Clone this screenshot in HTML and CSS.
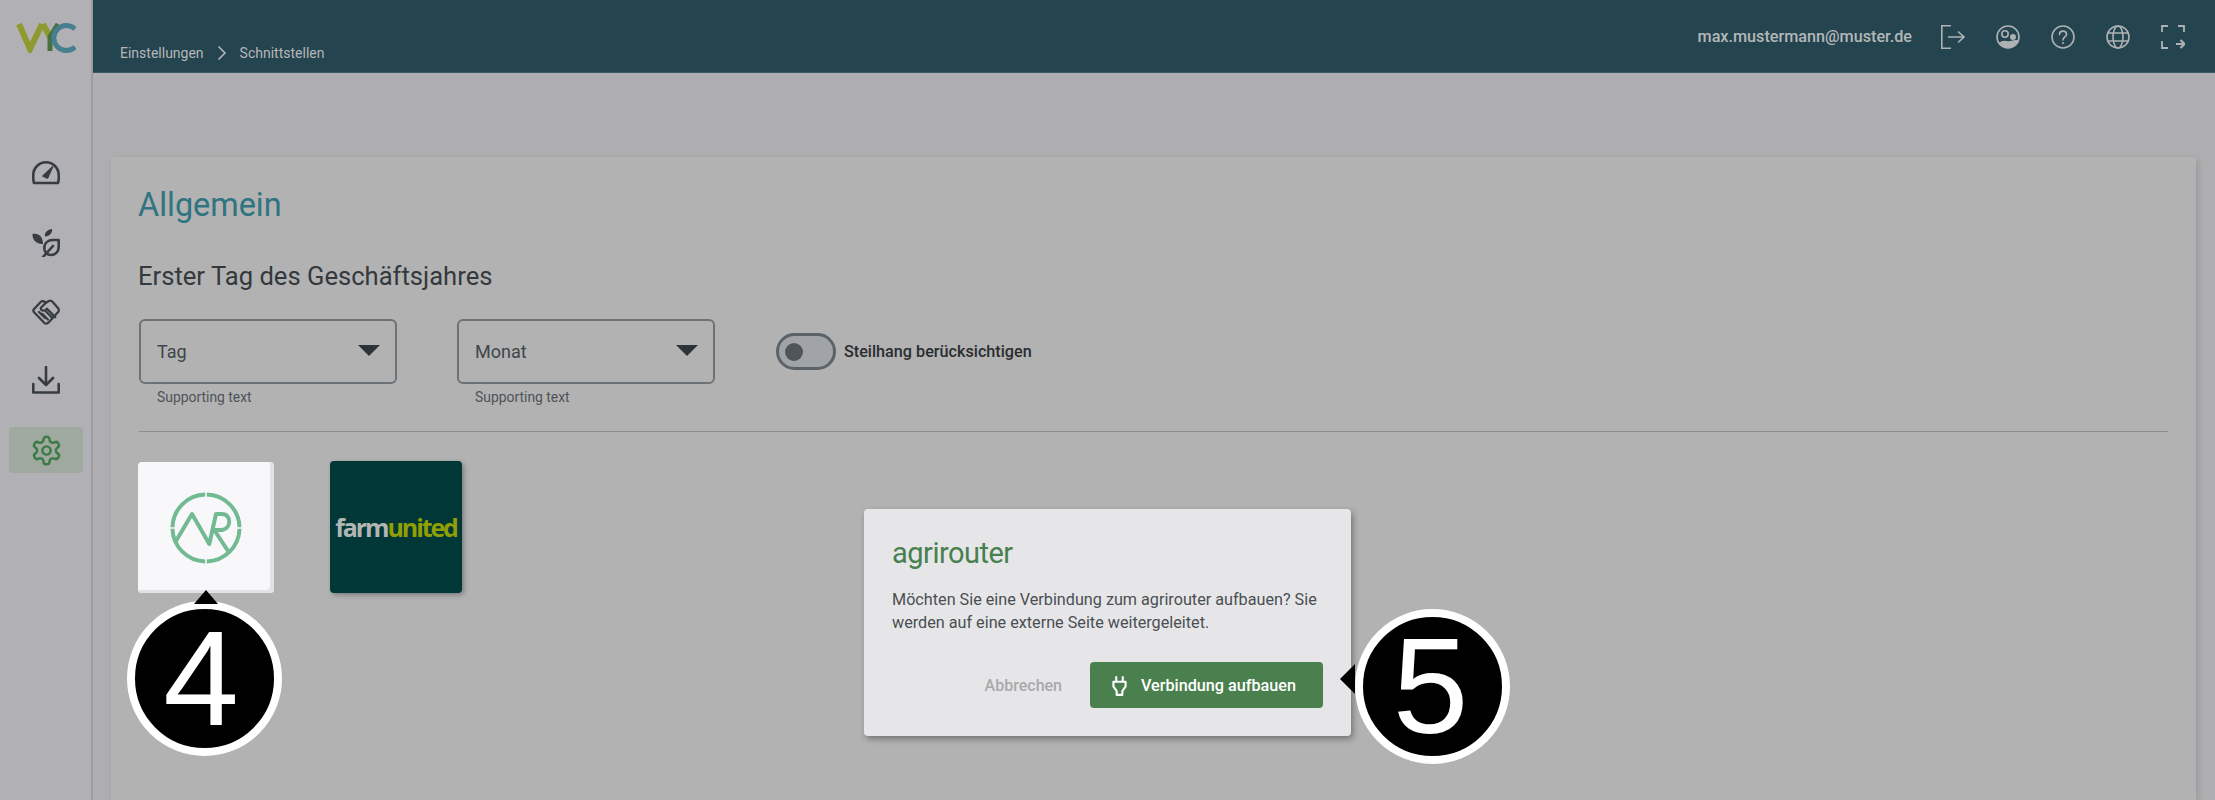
FILE: index.html
```html
<!DOCTYPE html>
<html lang="de">
<head>
    <meta charset="UTF-8">
    <meta name="viewport" content="width=device-width, initial-scale=1.0">
    <title>Schnittstellen</title>
    <link rel="stylesheet" href="styles.css">
</head>
<body>

    <aside class="sidebar">
        <svg class="logo" viewBox="0 0 60 30" fill="none" stroke-width="6">
            <path d="M3 1 L14 26 L26 1" stroke="#8d9a2e"/>
            <path d="M27 1 L34 14" stroke="#8d9a2e"/>
            <path d="M42 1 L34 14 V28" stroke="#47703f" stroke-width="5"/>
            <path d="M59 6 A12.5 12.5 0 1 0 59 24" stroke="#467f8f" stroke-width="5"/>
        </svg>

        <nav class="nav">
            <a class="nav-item">
                <svg class="icon-gauge" viewBox="0 0 28 28" fill="none" stroke="#373c41" stroke-width="2.6" stroke-linecap="round">
                    <path d="M2 25 Q1 22 1.3 17 A12.7 12.7 0 1 1 26.7 17 Q27 22 26 25 Z" stroke-linejoin="round"/>
                    <path d="M11 18 L20.5 9 L15.5 20 Z" fill="#373c41" stroke-width="1.6" stroke-linejoin="round"/>
                </svg>
            </a>
            <a class="nav-item">
                <svg viewBox="0 0 28 28" fill="none" stroke="#373c41" stroke-width="2.6" stroke-linejoin="round">
                    <path d="M0.5 5 C6 3.5 11 7 11 15 C5 15.5 0 11 0.5 5 Z" fill="#373c41" stroke="none"/>
                    <path d="M20 0 C20.5 4 18 7 13 7.5 C12 4 15 0.5 20 0 Z" fill="#373c41" stroke="none"/>
                    <path d="M26.7 11 V18 C26.7 23 23 26 19 26 C15 26 12.3 23 12.3 19 C12.3 14 16 11 21 11 Z"/>
                    <path d="M11 28 L21 17" stroke-linecap="round"/>
                </svg>
            </a>
            <a class="nav-item">
                <svg viewBox="0 0 30 28" fill="none" stroke="#373c41" stroke-width="2.4" stroke-linejoin="round" stroke-linecap="round">
                    <path d="M2 11 L9 3.5 Q11 1.5 13.5 3 L15 4 L18 2.2 Q20 1 22 3 L28 10 Q29.5 12 28 14 L17.5 25.5 Q15 27.5 13 25.5 L3 15 Q0.5 13 2 11 Z"/>
                    <path d="M15 4 L9.5 9.5 Q9 12 11.5 12.5 Q14 13 16 10.5 L25 19.5"/>
                    <path d="M7.5 14 L14 20.5 M11 16 L17 22 M15 13.5 L21 19.5"/>
                </svg>
            </a>
            <a class="nav-item">
                <svg class="icon-download" viewBox="0 0 28 28" fill="none" stroke="#373c41" stroke-width="2.6" stroke-linecap="round" stroke-linejoin="round">
                    <path d="M14 1 V19 M7 12 L14 19 L21 12"/>
                    <path d="M1.3 18 V26.5 H26.7 V18"/>
                </svg>
            </a>
            <a class="nav-item active">
                <svg class="gear" viewBox="0 0 24 24" fill="none" stroke="#3c7b45" stroke-width="1.8" stroke-linejoin="round">
                    <path d="M12.22 2h-.44a2 2 0 0 0-2 2v.18a2 2 0 0 1-1 1.73l-.43.25a2 2 0 0 1-2 0l-.15-.08a2 2 0 0 0-2.73.73l-.22.38a2 2 0 0 0 .73 2.73l.15.1a2 2 0 0 1 1 1.72v.51a2 2 0 0 1-1 1.74l-.15.09a2 2 0 0 0-.73 2.73l.22.38a2 2 0 0 0 2.73.73l.15-.08a2 2 0 0 1 2 0l.43.25a2 2 0 0 1 1 1.73V20a2 2 0 0 0 2 2h.44a2 2 0 0 0 2-2v-.18a2 2 0 0 1 1-1.73l.43-.25a2 2 0 0 1 2 0l.15.08a2 2 0 0 0 2.73-.73l.22-.39a2 2 0 0 0-.73-2.73l-.15-.08a2 2 0 0 1-1-1.74v-.5a2 2 0 0 1 1-1.74l.15-.09a2 2 0 0 0 .73-2.73l-.22-.38a2 2 0 0 0-2.73-.73l-.15.08a2 2 0 0 1-2 0l-.43-.25a2 2 0 0 1-1-1.73V4a2 2 0 0 0-2-2z"/>
                    <circle cx="12" cy="12" r="3"/>
                </svg>
            </a>
        </nav>
    </aside>

    <div class="main">
        <header class="topbar">
            <div class="breadcrumb">
                <span>Einstellungen</span>
                <svg viewBox="0 0 10 16" fill="none" stroke="#b4b7b8" stroke-width="1.6"><path d="M1.5 1.5 L8 8 L1.5 14.5"/></svg>
                <span>Schnittstellen</span>
            </div>
            <div class="topbar-right">
                <span class="user">max.mustermann@muster.de</span>
                <div class="top-icons">
                    <svg viewBox="0 0 24 24" fill="none" stroke="#aeb2b4" stroke-width="1.6">
                        <path d="M10 0.8 H0.8 V23.2 H10"/>
                        <path d="M7 12 H23 M17 6.5 L23 12 L17 17.5"/>
                    </svg>
                    <svg viewBox="0 0 24 24" fill="none" stroke="#aeb2b4" stroke-width="1.6">
                        <circle cx="12" cy="12" r="11"/>
                        <circle cx="9" cy="9" r="3.2"/>
                        <circle cx="17" cy="12" r="2.2" fill="#aeb2b4"/>
                        <path d="M4 18 C8 15 10 17 12 17 C15 17 18 15 22 16 C19 22 8 24 4 18 Z" fill="#aeb2b4"/>
                    </svg>
                    <svg viewBox="0 0 24 24" fill="none" stroke="#aeb2b4" stroke-width="1.6">
                        <circle cx="12" cy="12" r="11"/>
                        <path d="M8.5 9.5 C8.5 5 15.5 5 15.5 9.5 C15.5 12 12 12 12 15" stroke-linecap="round"/>
                        <circle cx="12" cy="18" r="1" fill="#aeb2b4" stroke="none"/>
                    </svg>
                    <svg viewBox="0 0 24 24" fill="none" stroke="#aeb2b4" stroke-width="1.6">
                        <circle cx="12" cy="12" r="11"/>
                        <ellipse cx="12" cy="12" rx="5" ry="11"/>
                        <path d="M1.8 8 H22.2 M1.8 16 H22.2"/>
                    </svg>
                    <svg viewBox="0 0 24 24" fill="none" stroke="#aeb2b4" stroke-width="1.8">
                        <path d="M1 7 V1 H7 M17 1 H23 V7 M1 16 V23 H7"/>
                        <path d="M15 19 H23 M19.5 15 L23.5 19 L19.5 23" stroke-width="2.2"/>
                    </svg>
                </div>
            </div>
        </header>

        <main class="content">
            <section class="card">
                <h1>Allgemein</h1>
                <h2>Erster Tag des Geschäftsjahres</h2>

                <div class="form-row">
                    <div class="field">
                        <div class="select"><span>Tag</span><i class="caret"></i></div>
                        <div class="hint">Supporting text</div>
                    </div>
                    <div class="field">
                        <div class="select"><span>Monat</span><i class="caret"></i></div>
                        <div class="hint">Supporting text</div>
                    </div>
                    <label class="switch">
                        <span class="track"><span class="knob"></span></span>
                        Steilhang berücksichtigen
                    </label>
                </div>

                <hr class="divider">

                <div class="tiles">
                    <div class="tile tile-ar">
                        <svg viewBox="0 0 72 72" fill="none" stroke="#72ba92" stroke-width="4">
                            <path d="M36.8 2.5 A33.5 33.5 0 0 1 69.5 35.2"/>
                            <path d="M69.5 36.8 A33.5 33.5 0 0 1 36.8 69.5"/>
                            <path d="M35.2 69.5 A33.5 33.5 0 0 1 2.5 36.8"/>
                            <path d="M2.5 35.2 A33.5 33.5 0 0 1 35.2 2.5"/>
                            <path d="M6 49 L22 22 L39.3 52 L46 22 H52 C62 22 62 38 50 38 H44.3 L59.3 61" stroke-linejoin="round"/>
                        </svg>
                    </div>
                    <div class="tile tile-farm"><span class="farm">farm</span><span class="united">united</span></div>
                </div>
            </section>
        </main>
    </div>

    <div class="dialog">
        <h3>agrirouter</h3>
        <p>Möchten Sie eine Verbindung zum agrirouter aufbauen? Sie werden auf eine externe Seite weitergeleitet.</p>
        <div class="dialog-actions">
            <button class="btn-text">Abbrechen</button>
            <button class="btn-primary">
                <svg viewBox="0 0 16 22" fill="none" stroke="#fff" stroke-width="2.2" stroke-linejoin="round">
                    <path d="M4.5 1 V7 M11.5 1 V7"/>
                    <path d="M1.5 7 H14.5 V12 L11 17 V21 H5 V17 L1.5 12 Z"/>
                </svg>
                Verbindung aufbauen
            </button>
        </div>
    </div>

    <div class="callout callout-4">4</div>
    <div class="callout callout-5">5</div>

</body>
</html>
```

FILE: styles.css
```css
* {
    box-sizing: border-box;
}

body {
    font-family: Roboto, Arial, sans-serif;
    margin: 0;
    padding: 0;
    height: 100vh;
    overflow: hidden;
    display: flex;
    background-color: #aeaeb0;
    color: #33393d;
}

.sidebar {
    width: 93px;
    flex-shrink: 0;
    background-color: #b1b1b5;
    border-right: 2px solid #9d9da0;
    padding-top: 23px;
}

.logo {
    display: block;
    width: 60px;
    height: 30px;
    margin-left: 16px;
}

.nav {
    margin-top: 98px;
    margin-left: 9px;
    width: 74px;
    display: flex;
    flex-direction: column;
    gap: 23px;
}

.nav-item {
    height: 46px;
    display: flex;
    align-items: center;
    justify-content: center;
    border-radius: 4px;
}

.nav-item svg {
    width: 28px;
    height: 28px;
}

.nav-item svg.icon-gauge {
    margin-top: -4px;
}

.nav-item svg.icon-download {
    margin-top: -2px;
}

.nav-item svg.gear {
    width: 33px;
    height: 33px;
}

.nav-item.active {
    background-color: #a0a9a0;
}

.main {
    flex: 1;
    display: flex;
    flex-direction: column;
    min-width: 0;
}

.topbar {
    height: 73px;
    flex-shrink: 0;
    background-color: #24444f;
    border-bottom: 1px solid #3a5964;
    display: flex;
    justify-content: space-between;
    padding: 0 30px 0 27px;
    color: #b4b7b8;
}

.breadcrumb {
    display: flex;
    align-items: center;
    gap: 13px;
    font-size: 14px;
    align-self: flex-end;
    height: 36px;
    padding-bottom: 3px;
}

.breadcrumb svg {
    width: 10px;
    height: 16px;
}

.topbar-right {
    display: flex;
    align-items: center;
    gap: 29px;
    height: 73px;
}

.user {
    font-size: 16.2px;
    font-weight: 500;
}

.top-icons {
    display: flex;
    gap: 31px;
}

.top-icons svg {
    width: 24px;
    height: 24px;
}

.content {
    flex: 1;
    padding: 84px 19px 0 18px;
    min-height: 0;
}

.card {
    height: 100%;
    background-color: #b2b2b2;
    box-shadow: 2px 2px 6px rgba(0, 0, 0, 0.12);
    border-radius: 2px 2px 0 0;
    padding: 28px 28px 0 28px;
}

h1 {
    margin: 0 0 0 -1px;
    font-size: 32.4px;
    font-weight: 400;
    line-height: 40px;
    color: #2f7480;
}

h2 {
    margin: 35px 0 0 -1px;
    font-size: 25.6px;
    font-weight: 400;
    line-height: 32px;
    color: #33393d;
}

.form-row {
    display: flex;
    margin-top: 27px;
    align-items: flex-start;
}

.field {
    width: 258px;
    margin-right: 60px;
}

.select {
    height: 65px;
    border: 2px solid #6c7276;
    border-radius: 6px;
    display: flex;
    align-items: center;
    justify-content: space-between;
    padding: 0 15px 0 16px;
    font-size: 18px;
    color: #3f4549;
}

.caret {
    width: 0;
    height: 0;
    border-left: 11px solid transparent;
    border-right: 11px solid transparent;
    border-top: 11px solid #2d3337;
    margin-top: -2px;
}

.hint {
    margin-top: 5px;
    padding-left: 18px;
    font-size: 13.9px;
    line-height: 16px;
    color: #4d5358;
}

.switch {
    display: flex;
    align-items: center;
    gap: 8px;
    margin-left: 1px;
    margin-top: 14px;
    font-size: 16.2px;
    font-weight: 500;
    color: #2a2d2f;
}

.track {
    width: 60px;
    height: 37px;
    border: 3px solid #5c6368;
    border-radius: 19px;
    background-color: #a0a3a7;
    display: flex;
    align-items: center;
    padding-left: 6px;
}

.knob {
    width: 18px;
    height: 18px;
    border-radius: 50%;
    background-color: #4f5559;
}

.divider {
    border: none;
    border-top: 1px solid #8e8e8e;
    margin: 26px 0 0;
}

.tiles {
    display: flex;
    align-items: center;
    gap: 56px;
    margin-top: 28px;
}

.tile {
    display: flex;
    align-items: center;
    justify-content: center;
    border-radius: 4px;
}

.tile-ar {
    width: 136px;
    height: 131px;
    background-color: #f8f8fb;
    box-shadow: inset -4px -3px 0 #e3e3e5;
    margin-left: -1px;
    margin-top: 2px;
}

.tile-ar svg {
    width: 72px;
    height: 72px;
}

.tile-farm {
    width: 132px;
    height: 132px;
    background-color: #013736;
    box-shadow: 2px 2px 5px rgba(0, 0, 0, 0.3);
    font-family: "Open Sans", Arial, sans-serif;
    font-size: 25px;
    font-weight: 700;
    letter-spacing: -2.1px;
}

.farm {
    color: #b1b5b3;
}

.united {
    color: #8f9f05;
}

.dialog {
    position: absolute;
    left: 864px;
    top: 509px;
    width: 487px;
    height: 227px;
    background-color: #e6e6e8;
    border-radius: 4px;
    box-shadow: 2px 3px 6px rgba(0, 0, 0, 0.35);
    padding: 26px 28px 0;
}

h3 {
    margin: 0;
    font-size: 29px;
    font-weight: 400;
    letter-spacing: -0.5px;
    line-height: 36px;
    color: #47804f;
}

.dialog p {
    margin: 17px 0 0;
    font-size: 16.2px;
    line-height: 23px;
    color: #4a4f53;
}

.dialog-actions {
    display: flex;
    justify-content: flex-end;
    align-items: center;
    margin-top: 28px;
    gap: 28px;
}

.btn-text {
    border: none;
    background: none;
    padding: 0;
    font-family: inherit;
    font-size: 16px;
    font-weight: 500;
    color: #a9a9ab;
}

.btn-primary {
    width: 233px;
    height: 46px;
    border: none;
    border-radius: 4px;
    background-color: #4a804e;
    color: #fff;
    font-family: inherit;
    font-size: 16.2px;
    font-weight: 500;
    display: flex;
    align-items: center;
    gap: 14px;
    padding-left: 22px;
}

.btn-primary svg {
    width: 15px;
    height: 21px;
}

.callout {
    position: absolute;
    width: 155px;
    height: 155px;
    border-radius: 50%;
    border: 8px solid #fff;
    background-color: #000;
    color: #fff;
    font-family: "Liberation Sans", Arial, sans-serif;
    font-size: 136px;
    line-height: 139px;
    text-align: center;
}

.callout::before {
    content: "";
    position: absolute;
    width: 0;
    height: 0;
}

.callout-4 {
    left: 127px;
    top: 601px;
    text-indent: -7px;
}

.callout-4::before {
    left: 59px;
    top: -19px;
    border-left: 12px solid transparent;
    border-right: 12px solid transparent;
    border-bottom: 14px solid #000;
}

.callout-5 {
    left: 1355px;
    top: 609px;
    text-indent: -4px;
}

.callout-5::before {
    left: -23px;
    top: 47px;
    border-top: 15px solid transparent;
    border-bottom: 15px solid transparent;
    border-right: 15px solid #000;
}
```
